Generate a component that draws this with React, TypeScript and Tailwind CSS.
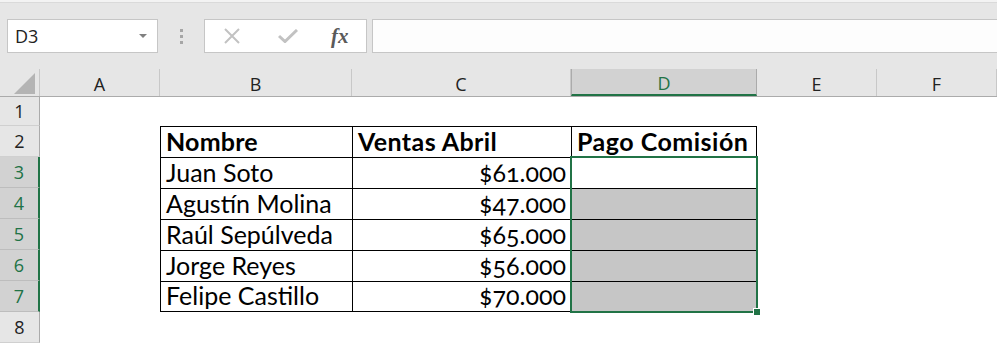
const rows = [
  { name: "Juan Soto", sales: "$61.000" },
  { name: "Agustín Molina", sales: "$47.000" },
  { name: "Raúl Sepúlveda", sales: "$65.000" },
  { name: "Jorge Reyes", sales: "$56.000" },
  { name: "Felipe Castillo", sales: "$70.000" },
];

const cols = [
  { id: "A", w: "w-[120px]" },
  { id: "B", w: "w-[192px]" },
  { id: "C", w: "w-[219px]" },
  { id: "D", w: "w-[186px]" },
  { id: "E", w: "w-[120px]" },
  { id: "F", w: "w-[120px]" },
];

// fuentes: UI de Excel y celdas (Raleway no está, Lato se parece)
const ui = "font-['Open_Sans','Noto_Sans',sans-serif]";
const cell = "font-['Lato','Noto_Sans',sans-serif] text-[25px] leading-none text-black";

function RowHeader({ n, selected, h }: { n: number; selected?: boolean; h: string }) {
  return (
    <div
      className={`${ui} w-[40px] ${h} shrink-0 flex items-center justify-center text-[18px] border-b ${
        selected
          ? "bg-[#d2d2d2] text-[#217346] border-r-2 border-r-[#217346] border-b-[#bdbdbd]"
          : "bg-[#e6e6e6] text-[#222] border-r border-r-[#ababab] border-b-[#d0d0d0]"
      }`}
    >
      {n}
    </div>
  );
}

export default function App() {
  return (
    <div className="w-[997px] h-[343px] overflow-hidden bg-white">
      {/* barra de fórmulas */}
      <div className="h-[69px] bg-[#e6e6e6] flex flex-col">
        <div className="h-[3px] bg-[#f3f3f3] border-b border-[#dadada]" />
        <div className="flex items-start pt-[16px] pl-[7px]">
          <div className="w-[151px] h-[34px] shrink-0 bg-white border border-[#c6c6c6] flex items-center pl-[7px] pr-[10px]">
            <span className={`${ui} text-[18px] text-[#222] flex-1`}>D3</span>
            <span className="w-0 h-0 border-l-[4px] border-r-[4px] border-t-[4px] border-l-transparent border-r-transparent border-t-[#808080]" />
          </div>
          <div className="w-[46px] h-[34px] shrink-0 flex flex-col items-center justify-center gap-[3px]">
            <span className="w-[3px] h-[3px] bg-[#a6a6a6]" />
            <span className="w-[3px] h-[3px] bg-[#a6a6a6]" />
            <span className="w-[3px] h-[3px] bg-[#a6a6a6]" />
          </div>
          <div className="w-[163px] h-[34px] shrink-0 bg-white border border-[#c6c6c6] flex items-center pl-[18px]">
            <svg width="18" height="16" viewBox="0 0 18 16" className="mr-[37px]">
              <path d="M2 1 L16 15 M16 1 L2 15" stroke="#c2c2c2" strokeWidth="2" fill="none" />
            </svg>
            <svg width="20" height="14" viewBox="0 0 20 14" className="mr-[33px]">
              <path d="M1 7 L7 12.5 L19 1" stroke="#c2c2c2" strokeWidth="3" fill="none" />
            </svg>
            <span className="font-['Liberation_Serif','DejaVu_Serif',serif] text-[21px] italic font-bold text-[#5a5a5a] leading-none">
              fx
            </span>
          </div>
          <div className="ml-[5px] flex-1 h-[34px] bg-[#fdfdfd] border border-r-0 border-[#c6c6c6]" />
        </div>
      </div>

      {/* encabezados de columna */}
      <div className={`${ui} flex h-[28px] bg-[#e6e6e6] border-b border-[#ababab]`}>
        <div className="w-[40px] shrink-0 border-r border-[#c8c8c8] flex items-end justify-end pr-[4px] pb-[2px]">
          <svg width="21" height="21" viewBox="0 0 21 21">
            <path d="M21 0 L21 21 L0 21 Z" fill="#b4b4b4" />
          </svg>
        </div>
        {cols.map((c) => (
          <div
            key={c.id}
            className={`${c.w} shrink-0 flex items-center justify-center text-[18px] pt-[4px] ${
              c.id === "D"
                ? "bg-[#d2d2d2] text-[#217346] border-x border-[#ababab] border-b-2 border-b-[#217346]"
                : "text-[#222] border-r border-[#c8c8c8]"
            }`}
          >
            {c.id}
          </div>
        ))}
      </div>

      {/* cuerpo de la hoja */}
      <div className="relative">
        <div className="flex">
          <RowHeader n={1} h="h-[29px]" />
        </div>

        <div className="flex h-[31px]">
          <RowHeader n={2} h="h-[31px]" />
          <div className="w-[120px] shrink-0" />
          <div className={`${cell} w-[192px] shrink-0 border-l border-t border-black flex items-end pl-[5px] pb-[3px] font-bold tracking-[0.2px]`}>
            Nombre
          </div>
          <div className={`${cell} w-[219px] shrink-0 border-l border-t border-black flex items-end pl-[5px] pb-[3px] font-bold tracking-[0.4px]`}>
            Ventas Abril
          </div>
          <div className={`${cell} w-[186px] shrink-0 border-l border-t border-r border-black flex items-end pl-[5px] pb-[3px] font-bold tracking-[0.5px]`}>
            Pago Comisión
          </div>
        </div>

        {rows.map((r, i) => {
          const last = i === rows.length - 1 ? "border-b" : "";
          return (
            <div key={r.name} className="flex h-[31px]">
              <RowHeader n={i + 3} selected h="h-[31px]" />
              <div className="w-[120px] shrink-0" />
              <div className={`${cell} w-[192px] shrink-0 border-l border-t border-black flex items-end pl-[5px] pb-[3px] ${last}`}>
                {r.name}
              </div>
              <div className={`${cell} w-[219px] shrink-0 border-l border-t border-black flex items-end justify-end pr-[5px] pb-[3px] oldstyle-nums ${last}`}>
                {r.sales}
              </div>
              <div
                className={`w-[186px] shrink-0 border-l border-t border-r border-black ${
                  i === 0 ? "bg-white" : "bg-[#c6c6c6]"
                } ${last}`}
              />
            </div>
          );
        })}

        <div className="flex">
          <RowHeader n={8} h="h-[31px]" />
        </div>

        {/* selección D3:D7 */}
        <div className="absolute left-[570px] top-[59px] w-[188px] h-[157px] border-2 border-[#217346] pointer-events-none">
          <span className="absolute -right-[5px] -bottom-[5px] w-[8px] h-[8px] bg-[#217346] border border-white" />
        </div>
      </div>
    </div>
  );
}
